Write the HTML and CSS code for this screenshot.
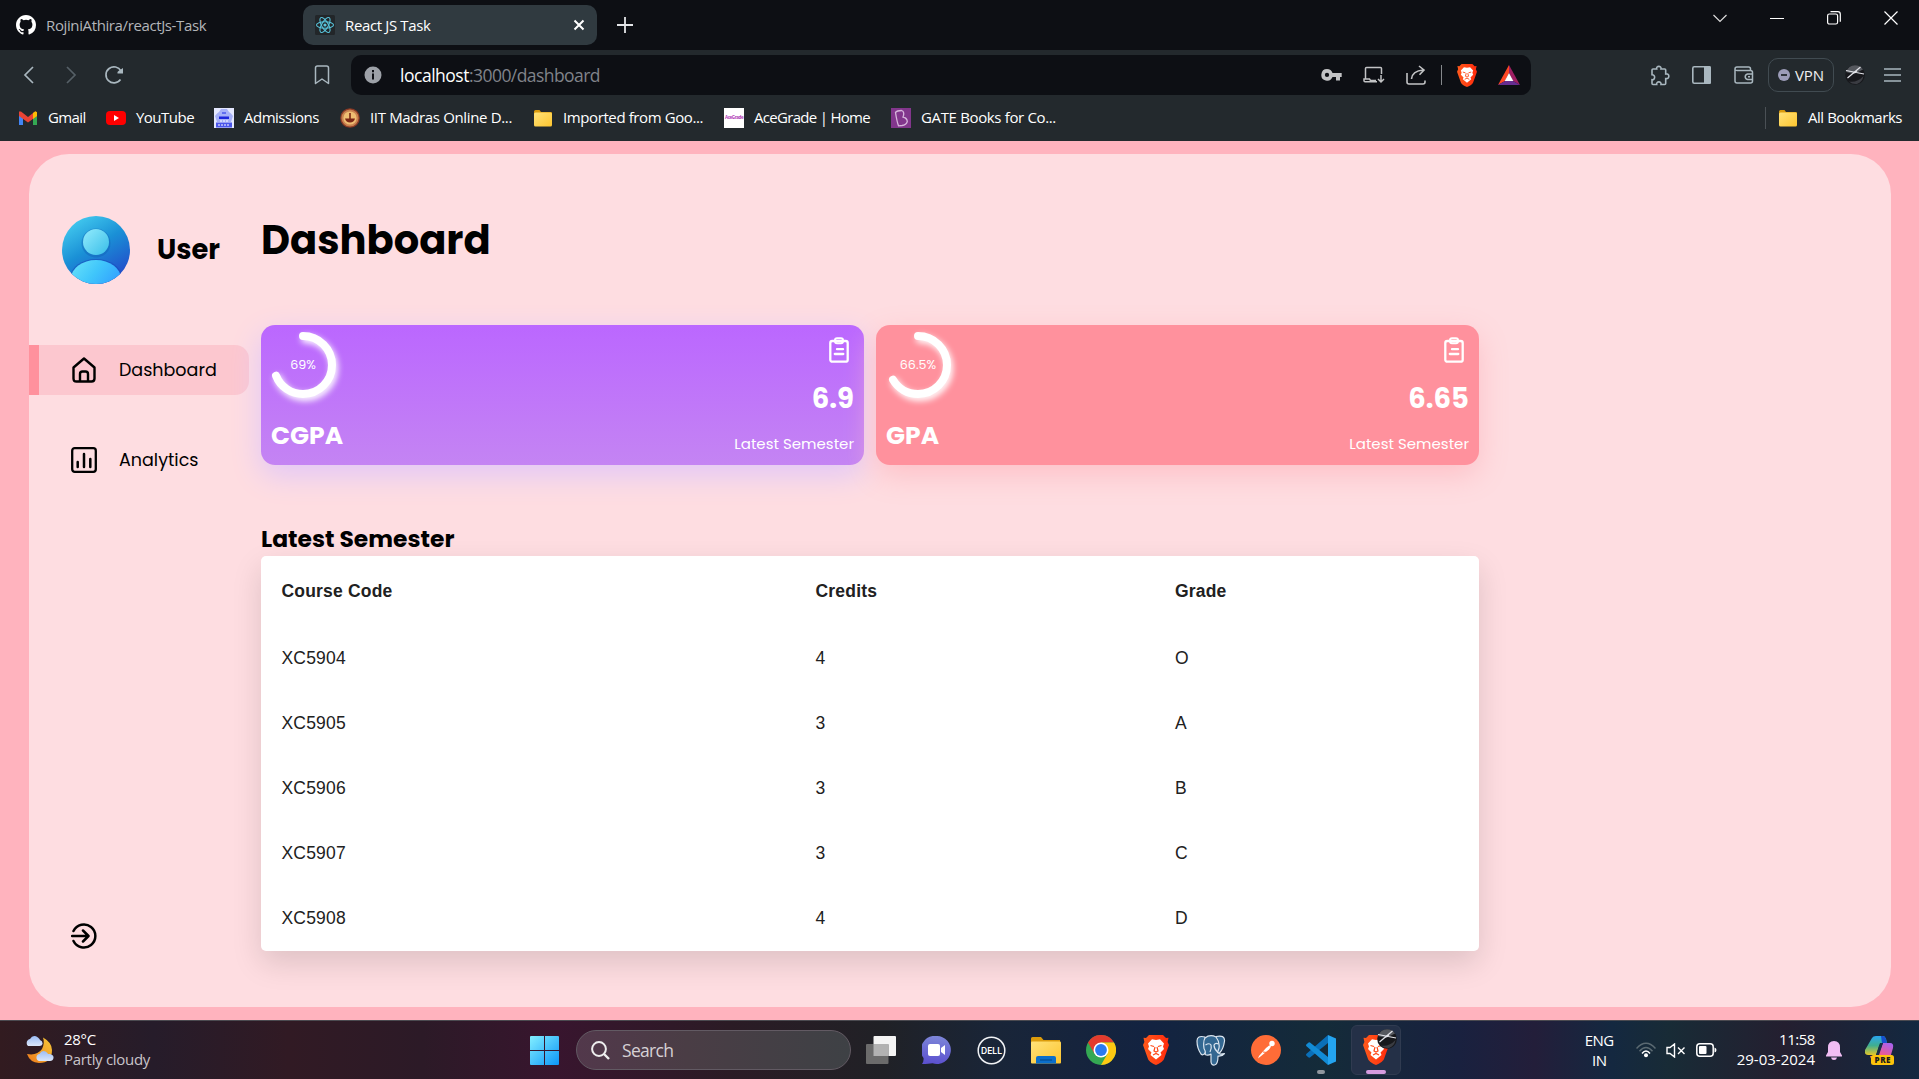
FILE: index.html
```html
<!DOCTYPE html>
<html lang="en">
<head>
<meta charset="utf-8">
<title>React JS Task</title>
<link rel="stylesheet" href="styles.css">
</head>
<body>
<svg class="defs" width="0" height="0">
  <defs>
    <linearGradient id="brave-g" x1="0" x2="1"><stop offset="0" stop-color="#ff5a1c"/><stop offset="1" stop-color="#ff2a0c"/></linearGradient>
    <linearGradient id="folder-g" x1="0" x2="1" y1="0" y2="1"><stop offset="0" stop-color="#ffe27a"/><stop offset="1" stop-color="#fdc52f"/></linearGradient>
    <linearGradient id="avatar-g" x1="0.2" x2="0.8" y1="0" y2="1"><stop offset="0" stop-color="#45cdf0"/><stop offset="0.45" stop-color="#1a90d6"/><stop offset="1" stop-color="#2344c9"/></linearGradient>
    <linearGradient id="head-g" x1="0" x2="1" y1="0" y2="1"><stop offset="0" stop-color="#93ecfd"/><stop offset="1" stop-color="#38bde8"/></linearGradient>
    <linearGradient id="torso-g" x1="0" x2="1" y1="0" y2="0.6"><stop offset="0" stop-color="#6be4f9"/><stop offset="0.5" stop-color="#40c6fb"/><stop offset="1" stop-color="#309cff"/></linearGradient>
    <clipPath id="avatar-c"><circle cx="34" cy="34" r="34"/></clipPath>
    <linearGradient id="win-g" x1="0" x2="1" y1="0" y2="1"><stop offset="0" stop-color="#83efff"/><stop offset="1" stop-color="#0c95f8"/></linearGradient>
    <linearGradient id="chat-g" x1="0.5" x2="0.4" y1="0" y2="1"><stop offset="0" stop-color="#7d86d8"/><stop offset="1" stop-color="#5b50cf"/></linearGradient>
    <linearGradient id="cloud-g" x1="0" x2="0" y1="0" y2="1"><stop offset="0" stop-color="#9cbdf5"/><stop offset="1" stop-color="#dce7fa"/></linearGradient>
    <linearGradient id="moon-g" x1="1" x2="0" y1="0" y2="1"><stop offset="0" stop-color="#f6c938"/><stop offset="1" stop-color="#ee7a1c"/></linearGradient>
    <linearGradient id="cop-a" x1="0" x2="0" y1="0" y2="1"><stop offset="0" stop-color="#2aa6ef"/><stop offset="0.5" stop-color="#3fae90"/><stop offset="1" stop-color="#e5c728"/></linearGradient>
    <linearGradient id="cop-b" x1="0.8" x2="0.2" y1="0" y2="1"><stop offset="0" stop-color="#a862ee"/><stop offset="0.6" stop-color="#ea5a94"/><stop offset="1" stop-color="#f6804f"/></linearGradient>
    <symbol id="brave" viewBox="0 0 26 30">
      <path d="M6 0h14l3 3 2.500-.3L24.600 7 26 10l-5 14c-1 2.500-5 5-8 6-3-1-7-3.500-8-6L0 10l1.400-3L.5 2.700 3 3z" fill="url(#brave-g)"/>
      <path d="M13 5l4-.8 4 4.300-1 3 1 2.500-3.500 3.500 1 2.500L13 24.500 7.500 20l1-2.500L5 14l1-2.500-1-3 4-4.300z" fill="#fff"/>
      <path d="M7.500 10.500l3.500 1M18.500 10.500l-3.500 1M12 12l-1 4 2 1 2-1-1-4M10 20l3-1.600 3 1.600" fill="none" stroke="#ff4a18" stroke-width="1.200"/>
    </symbol>
    <symbol id="folder" viewBox="0 0 20 20">
      <path d="M1 3.500Q1 2 2.500 2h4L8 4h10q1 0 1 1v3H1z" fill="#d99a0d"/>
      <rect x="1" y="4.500" width="18" height="14" rx="1.500" fill="url(#folder-g)"/>
    </symbol>
    <symbol id="stone" viewBox="0 0 20 20">
      <circle cx="10" cy="10" r="9.800" fill="#17181c"/>
      <path d="M1 7Q3.500.5 10 .3q5 0 8 4.200L9 9z" fill="#55585e"/>
      <path d="M4 16.500Q12 18 18.500 11q-1 6-6.500 8-5 .5-8-2.500z" fill="#3a3c42"/>
      <path d="M1 5.500l18 3.500M2.500 13L15.500 2M7 9l5-3" stroke="#e3e4ea" stroke-width="1.200" fill="none"/>
    </symbol>
    <symbol id="clipboard" viewBox="0 0 20 26">
      <rect x="1.300" y="4" width="17.400" height="20.700" rx="2" fill="none" stroke="#fff" stroke-width="2.300"/>
      <rect x="6" y="1.200" width="8" height="5" rx="2" fill="none" stroke="#fff" stroke-width="2"/>
      <path d="M8 12.200h6M5.800 17h8.500" stroke="#fff" stroke-width="2.300" stroke-linecap="round"/>
    </symbol>
  </defs>
</svg>

<header class="tabs">
  <div class="tab tab-idle">
    <svg width="20" height="20" viewBox="0 0 16 16"><path fill="#fff" d="M8 0C3.580 0 0 3.580 0 8c0 3.540 2.290 6.530 5.470 7.590.4.070.55-.17.55-.38 0-.19-.01-.82-.01-1.490-2.010.37-2.530-.49-2.690-.94-.09-.23-.48-.94-.82-1.130-.28-.15-.68-.52-.01-.53.63-.01 1.080.58 1.230.82.72 1.210 1.870.87 2.330.66.07-.52.28-.87.51-1.070-1.780-.2-3.640-.89-3.640-3.950 0-.87.31-1.590.82-2.150-.08-.2-.36-1.020.08-2.120 0 0 .67-.21 2.200.82a7.600 7.600 0 0 1 4 0c1.530-1.040 2.200-.82 2.200-.82.44 1.100.16 1.920.08 2.120.51.56.82 1.270.82 2.150 0 3.070-1.870 3.750-3.650 3.950.29.25.54.73.54 1.480 0 1.070-.01 1.930-.01 2.200 0 .21.15.46.55.38A8 8 0 0 0 16 8c0-4.420-3.580-8-8-8z"/></svg>
    <span>RojiniAthira/reactJs-Task</span>
  </div>
  <div class="tab tab-active">
    <svg width="20" height="20" viewBox="0 0 20 20"><rect width="20" height="20" rx="1.500" fill="#222629"/><g fill="none" stroke="#58c4dc" stroke-width="1.100"><ellipse cx="10" cy="10" rx="8.500" ry="3.300"/><ellipse cx="10" cy="10" rx="8.500" ry="3.300" transform="rotate(60 10 10)"/><ellipse cx="10" cy="10" rx="8.500" ry="3.300" transform="rotate(120 10 10)"/></g><circle cx="10" cy="10" r="1.600" fill="#58c4dc"/></svg>
    <span>React JS Task</span>
    <svg class="tab-close" width="12" height="12" viewBox="0 0 12 12"><path d="M1.500 1.500l9 9M10.500 1.500l-9 9" stroke="#fff" stroke-width="2"/></svg>
  </div>
  <svg class="plus" width="16" height="16" viewBox="0 0 16 16"><path d="M8 0v16M0 8h16" stroke="#e3e5e8" stroke-width="1.800"/></svg>
  <div class="winctl">
    <svg width="14" height="14" viewBox="0 0 14 14"><path d="M.5 4L7 10.500 13.500 4" fill="none" stroke="#ddd" stroke-width="1.200"/></svg>
    <svg width="14" height="14" viewBox="0 0 14 14"><path d="M0 7.500h14" stroke="#fff"/></svg>
    <svg width="14" height="14" viewBox="0 0 14 14"><rect x=".6" y="3" width="10" height="10" rx="1.800" fill="none" stroke="#fff" stroke-width="1.200"/><path d="M3.500.7h7.300q2.500 0 2.500 2.500v7.500" fill="none" stroke="#fff" stroke-width="1.200"/></svg>
    <svg width="14" height="14" viewBox="0 0 14 14"><path d="M.5.500l13 13M13.500.500l-13 13" stroke="#fff" stroke-width="1.200"/></svg>
  </div>
</header>

<nav class="toolbar">
  <svg class="t-back" width="12" height="20" viewBox="0 0 12 20"><path d="M10 2L2 10l8 8" fill="none" stroke="#a9b7bf" stroke-width="1.700"/></svg>
  <svg class="t-fwd" width="12" height="20" viewBox="0 0 12 20"><path d="M2 2l8 8-8 8" fill="none" stroke="#566067" stroke-width="1.700"/></svg>
  <svg class="t-reload" width="20" height="20" viewBox="0 0 20 20"><path d="M16.500 14.500A8 8 0 1 1 17 6" fill="none" stroke="#a9b7bf" stroke-width="1.700"/><path d="M19 3v5.500h-5.500q-.5-1.700 1-2.500z" fill="#a9b7bf"/></svg>
  <svg class="t-mark" width="16" height="20" viewBox="0 0 16 20"><path d="M1.500 3q0-2 2-2h9q2 0 2 2v15.500L8 14l-6.500 4.500z" fill="none" stroke="#a9b7bf" stroke-width="1.500" stroke-linejoin="round"/></svg>
  <div class="url">
    <svg width="18" height="18" viewBox="0 0 18 18"><circle cx="9" cy="9" r="8.500" fill="#9da1a8"/><path d="M9 4v2.200M9 7.500v6" stroke="#0d0f14" stroke-width="2"/></svg>
    <span class="url-text"><b>localhost</b><i>:3000/dashboard</i></span>
    <div class="url-icons">
      <svg width="21" height="14" viewBox="0 0 21 14"><path fill-rule="evenodd" d="M6 1a5.800 5.800 0 1 0 5.500 8H15v3.500h4V9h1.700V5h-9.200A5.800 5.800 0 0 0 6 1zm0 3.800a2.100 2.100 0 1 1 0 4.300 2.100 2.100 0 0 1 0-4.300z" fill="#c2c3c5"/></svg>
      <svg width="22" height="18" viewBox="0 0 22 18"><path d="M18.500 8V2.500q0-1-1-1h-14q-1 0-1 1V13M14 15.800H2q-1 0-1-1V13h5.500l1 1.500H13M18 9v6.500M15 13l3 3 3-3" fill="none" stroke="#c2c3c5" stroke-width="1.500"/></svg>
      <svg width="20" height="20" viewBox="0 0 20 20"><path d="M1 8v9q0 2 2 2h14q2 0 2-2v-1.500M5.500 14q.5-8 12-9M13 1l5 4-4.500 4.800" fill="none" stroke="#c2c3c5" stroke-width="1.600"/></svg>
      <span class="sep"></span>
      <svg width="20" height="23"><use href="#brave"/></svg>
      <svg width="22" height="20" viewBox="0 0 22 20"><path d="M11 0L0 20l7-4 4-8z" fill="#ff4724"/><path d="M11 0l11 20-7-4-4-8z" fill="#9e1f63"/><path d="M0 20h22l-7-4H7z" fill="#662d91"/><path d="M11 8l4.300 8H6.700z" fill="#fff"/></svg>
    </div>
  </div>
  <div class="tools">
    <svg width="20" height="21" viewBox="0 0 20 21"><path d="M2 5q0-1 1-1h3.700C5.800.5 11.800.5 11 4h3.700q1 0 1 1v4c4.200-.8 4.200 5.300 0 4.600V18.500q0 1-1 1H11c.7-3.500-5-3.500-4.300 0H3q-1 0-1-1v-3.800c3.500.5 3.500-5.300 0-5z" fill="none" stroke="#a9b7bf" stroke-width="1.600"/></svg>
    <svg width="19" height="18" viewBox="0 0 19 18"><rect x=".8" y=".8" width="17.400" height="16.400" rx="1.500" fill="none" stroke="#a9b7bf" stroke-width="1.600"/><path d="M12 0h5.500q1.500 0 1.500 1.500v15q0 1.500-1.500 1.500H12z" fill="#a9b7bf"/></svg>
    <svg class="wallet" width="20" height="18" viewBox="0 0 20 18"><path d="M16.500 4.500V3q0-2-2-2H3Q1 1 1 3v12q0 2 2 2h13.500q2 0 2-2V6.500q0-2-2-2H3q-1.500 0-2-1M19 8h-5.500a2.800 2.800 0 0 0 0 5.500H19M14 10.700h2" fill="none" stroke="#a9b7bf" stroke-width="1.500"/></svg>
    <div class="vpn"><svg width="12" height="12" viewBox="0 0 12 12"><circle cx="6" cy="6" r="6" fill="#9c9cb8"/><path d="M3 6h6" stroke="#23292d" stroke-width="1.800"/></svg><span>VPN</span></div>
    <svg class="profile" width="20" height="20"><use href="#stone"/></svg>
    <svg width="17" height="14" viewBox="0 0 17 14"><path d="M0 1h17M0 7h17M0 13h17" stroke="#a9b7bf" stroke-width="1.500"/></svg>
  </div>
</nav>

<nav class="bookmarks">
  <div class="bm bm-gmail"><svg width="20" height="20" viewBox="0 0 20 20"><path d="M1 17V5h4v12z" fill="#4285f4"/><path d="M15 17V5h4v12z" fill="#34a853"/><path d="M1 3.500h2L10 9l7-5.500 2 1V8l-9 6.500L1 8z" fill="#ea4335"/><path d="M15 5l2.500-1.700 1.500 1V8l-4 3z" fill="#fbbc04"/></svg><span>Gmail</span></div>
  <div class="bm bm-youtube"><svg width="20" height="20" viewBox="0 0 20 20"><rect y="3" width="20" height="14" rx="4" fill="#f00"/><path d="M8 7l5 3-5 3z" fill="#fff"/></svg><span>YouTube</span></div>
  <div class="bm bm-admissions"><svg width="20" height="20" viewBox="0 0 20 20"><rect width="20" height="20" fill="#e4e8ff"/><path d="M1 8q2-3 4-4l2-3h6l2 3q2 1 4 4l-2 6H3z" fill="#a5b0f8"/><path d="M5 8.500h10v2.500H5z" fill="#1c26dd"/><path d="M8 4h4v2H8z" fill="#5f6df0"/><path d="M2 14.500h16v5H2z" fill="#4a55ea"/><path d="M4 17h12M6 13h8" stroke="#fff" stroke-dasharray="2 1"/></svg><span>Admissions</span></div>
  <div class="bm bm-iit"><svg width="20" height="20" viewBox="0 0 20 20"><circle cx="10" cy="10" r="9.800" fill="#8c3a25"/><circle cx="10" cy="10" r="8.600" fill="#c98250"/><circle cx="10" cy="10" r="6.600" fill="#efbd72"/><path d="M5 10.500h10q-1 4-5 4t-5-4z" fill="#7c2514"/><path d="M10 5v6" stroke="#7c2514" stroke-width="1.600"/></svg><span>IIT Madras Online D...</span></div>
  <div class="bm bm-imported"><svg width="20" height="20"><use href="#folder"/></svg><span>Imported from Goo...</span></div>
  <div class="bm bm-ace"><svg width="20" height="20" viewBox="0 0 20 20"><rect width="20" height="20" fill="#fff"/><text x="1" y="11.300" font-family="Open Sans, sans-serif" font-size="4.500" font-weight="700" fill="#b03bb5" textLength="18">AceGrade</text></svg><span>AceGrade | Home</span></div>
  <div class="bm bm-gate"><svg width="20" height="20" viewBox="0 0 20 20"><rect width="20" height="20" fill="#82368c"/><path d="M4.500 4.500q1.500-2 6-2 3 1 2 5l-.5 1.500q4 1 4.300 4.500-1 3.500-5.300 4l-3.500.3Q6 14 4.500 4.500z" fill="none" stroke="#d7b5dc" stroke-width="1.300"/></svg><span>GATE Books for Co...</span></div>
  <div class="bm bm-all"><svg width="20" height="20"><use href="#folder"/></svg><span>All Bookmarks</span></div>
</nav>

<main class="page">
  <div class="panel">
    <aside class="side">
      <div class="user">
        <svg width="68" height="68" viewBox="0 0 68 68"><g clip-path="url(#avatar-c)"><rect width="68" height="68" fill="url(#avatar-g)"/><circle cx="34" cy="27" r="14.500" fill="#1260b5" opacity=".4"/><ellipse cx="34" cy="62" rx="26" ry="19" fill="#1546b8" opacity=".5"/><circle cx="34" cy="26" r="13" fill="url(#head-g)"/><ellipse cx="34" cy="62.500" rx="25" ry="18.500" fill="url(#torso-g)"/></g></svg>
        <h2>User</h2>
      </div>
      <a class="nav nav-on">
        <svg width="26" height="26" viewBox="0 0 26 26"><path d="M2.500 10.500L13 1.500l10.500 9v11q0 3-3 3h-15q-3 0-3-3z" fill="none" stroke="#000" stroke-width="2.400" stroke-linejoin="round"/><path d="M9 24v-7q0-2.500 2.500-2.500h3q2.500 0 2.500 2.500v7" fill="none" stroke="#000" stroke-width="2.400"/></svg>
        <span>Dashboard</span>
      </a>
      <a class="nav">
        <svg width="26" height="26" viewBox="0 0 26 26"><rect x="1.200" y="1.200" width="23.600" height="23.600" rx="2.500" fill="none" stroke="#000" stroke-width="2.300"/><path d="M6.700 15v5M13 7v13M19.300 12v8" stroke="#000" stroke-width="2.500" stroke-linecap="round"/></svg>
        <span>Analytics</span>
      </a>
      <svg class="logout" width="26" height="26" viewBox="0 0 26 26"><path d="M2.500 8a11.500 11.500 0 1 1 0 10M1 13h16M12 7.500l5.500 5.500-5.500 5.500" fill="none" stroke="#000" stroke-width="2.500" stroke-linecap="round" stroke-linejoin="round"/></svg>
    </aside>

    <section class="content">
      <h1>Dashboard</h1>
      <div class="cards">
        <article class="card violet">
          <div class="card-l">
            <div class="ring">
              <svg width="84" height="84" viewBox="0 0 84 84"><circle class="arc" cx="42" cy="42" r="29" pathLength="100" stroke-dasharray="69 100" transform="rotate(-90 42 42)"/></svg>
              <span class="pct">69%</span>
            </div>
            <h3>CGPA</h3>
          </div>
          <div class="card-r">
            <svg width="20" height="26"><use href="#clipboard"/></svg>
            <strong>6.9</strong>
            <span class="note">Latest Semester</span>
          </div>
        </article>
        <article class="card rose">
          <div class="card-l">
            <div class="ring">
              <svg width="84" height="84" viewBox="0 0 84 84"><circle class="arc" cx="42" cy="42" r="29" pathLength="100" stroke-dasharray="66.5 100" transform="rotate(-90 42 42)"/></svg>
              <span class="pct">66.5%</span>
            </div>
            <h3>GPA</h3>
          </div>
          <div class="card-r">
            <svg width="20" height="26"><use href="#clipboard"/></svg>
            <strong>6.65</strong>
            <span class="note">Latest Semester</span>
          </div>
        </article>
      </div>
      <h2 class="sub">Latest Semester</h2>
      <div class="grid">
        <div class="row head"><span>Course Code</span><span>Credits</span><span>Grade</span></div>
        <div class="row"><span>XC5904</span><span>4</span><span>O</span></div>
        <div class="row"><span>XC5905</span><span>3</span><span>A</span></div>
        <div class="row"><span>XC5906</span><span>3</span><span>B</span></div>
        <div class="row"><span>XC5907</span><span>3</span><span>C</span></div>
        <div class="row"><span>XC5908</span><span>4</span><span>D</span></div>
      </div>
    </section>
  </div>
</main>

<footer class="taskbar">
  <div class="weather">
    <svg width="32" height="30" viewBox="0 0 32 30"><path d="M19 2.500q9 5 9 12.500 0 13-13 13Q6 27.500 3 19q10 2 15-5 3-6 1-11.500z" fill="url(#moon-g)"/><path d="M4 11a4 4 0 0 1 0-6q1-1 2-1 3-5 8-1.500Q16 4 16 5q3 1 2.500 4-.5 2-3 2z" fill="url(#cloud-g)"/><path d="M15 26a3.600 3.600 0 0 1 .5-7q2-4 6-2.500 2 1 2.500 2.500h2q4 1 3.500 4-.5 3-3.500 3z" fill="url(#cloud-g)"/></svg>
    <div><p class="deg">28°C</p><p class="sky">Partly cloudy</p></div>
  </div>
  <div class="apps">
    <svg class="start" width="29" height="29" viewBox="0 0 29 29"><path d="M0 1q0-1 1-1h13v14H0zM15 0h13q1 0 1 1v13H15zM0 15h14v14H1q-1 0-1-1zM15 15h14v13q0 1-1 1H15z" fill="url(#win-g)"/></svg>
    <div class="search"><svg width="19" height="19" viewBox="0 0 19 19"><circle cx="8" cy="8" r="6.900" fill="none" stroke="#eee" stroke-width="2"/><path d="M13 13l5 5" stroke="#eee" stroke-width="2.400"/></svg><span>Search</span></div>
    <div class="app"><svg width="30" height="28" viewBox="0 0 30 28"><rect x="7.500" width="22.500" height="20" rx="1" fill="#f4f4f4"/><rect y="8" width="22.500" height="20" rx="1" fill="#6b6b6b"/><rect x="7.500" y="8" width="15" height="12" fill="#b2b2b2"/></svg></div>
    <div class="app"><svg width="29" height="28" viewBox="0 0 29 28"><path d="M14.500 0a14 14 0 1 1-4 27.300Q7 28 0 28q2-3 1.500-6A14 14 0 0 1 14.500 0z" fill="url(#chat-g)"/><rect x="6" y="8" width="12" height="12" rx="2" fill="#fff"/><path d="M19 12l4-3v10l-4-3z" fill="#fff"/></svg></div>
    <div class="app"><svg width="29" height="29" viewBox="0 0 29 29"><circle cx="14.500" cy="14.500" r="13.300" fill="none" stroke="#f0f2f5" stroke-width="1.500"/><text x="4" y="18" font-family="Inter, sans-serif" font-size="9.500" font-weight="600" fill="#fff" textLength="21" lengthAdjust="spacingAndGlyphs">DELL</text></svg></div>
    <div class="app"><svg width="30" height="27" viewBox="0 0 30 27"><path d="M0 1.500Q0 0 1.500 0H10l2.500 3H29v6H0z" fill="#dc9c0c"/><rect y="4.500" width="30" height="22" rx="1" fill="url(#folder-g)"/><path d="M5 26.500V21q0-2 2-2h16q2 0 2 2v5.500z" fill="#0b6fcb"/><path d="M9 23h12" stroke="#064f96" stroke-width="1.300"/></svg></div>
    <div class="app"><svg width="30" height="30" viewBox="0 0 30 30"><circle cx="15" cy="15" r="15" fill="#34a853"/><path d="M2 7.500A15 15 0 0 1 28 7.500H15L8.500 18.800z" fill="#e33b2e"/><path d="M28 7.500A15 15 0 0 1 15 30l6.500-11.200L15 7.500z" fill="#fdc912"/><circle cx="15" cy="15" r="7.500" fill="#fff"/><circle cx="15" cy="15" r="5.900" fill="#2a7af0"/></svg></div>
    <div class="app"><svg width="26" height="30"><use href="#brave"/></svg></div>
    <div class="app"><svg width="30" height="31" viewBox="0 0 30 31"><g fill="#336791" stroke="#dbe5ef" stroke-width="1.200" stroke-linejoin="round"><path d="M9 2Q1 0 1 6q0 7 4 13 2 2 4-1l2-2z"/><path d="M20 1.500Q29-.5 28.500 6q-1 8-5 12l-5-1z"/><path d="M9 3q5-4 11-1 4 5 3 11l-1.500 4.500 3 1.700 4-.5q-2 2.700-6.500 2.300Q22 29.500 18.500 30q-3 .5-3.500-3V19q-3 2-6 .5Q10 17 8 13.500 7 6 9 3z"/><path d="M9.500 10q4-2.500 5.500 0 1 3-1 7M22.500 9q-3-1.500-4.500 1 0 4 3.500 7" fill="none"/></g></svg></div>
    <div class="app"><svg width="30" height="30" viewBox="0 0 30 30"><circle cx="15" cy="15" r="15" fill="#ff6c37"/><path d="M8 21l7-8q3-3 5-3 .5 2-2 4.500L9.500 21.500l-2.500 2z" fill="#fff"/><circle cx="21" cy="8.500" r="2.700" fill="#fff"/><path d="M12 17l4 .5" stroke="#ff6c37"/></svg></div>
    <div class="app"><svg width="30" height="30" viewBox="0 0 30 30"><path d="M22 0l8 3.500v23L22 30z" fill="#24a4f0"/><path d="M22 0v8L4 22.500Q3 23 2 22L.3 20.500q-.6-1 .2-1.700z" fill="#0a6fb8"/><path d="M22 30v-8L4 7.500Q3 7 2 8L.3 9.500q-.6 1 .2 1.700z" fill="#128bd5"/></svg><i class="dot"></i></div>
    <div class="app app-on"><svg width="26" height="30"><use href="#brave"/></svg><svg class="badge" width="20" height="20"><use href="#stone"/></svg><i class="dot"></i></div>
  </div>
  <div class="tray">
    <div class="lang"><p>ENG</p><p>IN</p></div>
    <svg class="wifi" width="20" height="16" viewBox="0 0 20 16"><g fill="none" stroke-width="1.500"><path d="M.5 6.500q9.500-10.500 19 0M3.500 9.200q6.500-7.500 13 0" stroke="#5b6a72"/><path d="M6 11.500q4-5 8 0" stroke="#fff"/></g><circle cx="10" cy="13.300" r="2" fill="#fff"/></svg>
    <svg class="mute" width="20" height="15" viewBox="0 0 20 15"><path d="M1 4.500h3L8.500 1v13L4 10.500H1zM12 4.500l6.500 6.500M18.500 4.500L12 11" fill="none" stroke="#fff" stroke-width="1.400"/></svg>
    <svg class="batt" width="21" height="14" viewBox="0 0 21 14"><rect x=".8" y=".8" width="16.400" height="12.400" rx="3" fill="none" stroke="#fff" stroke-width="1.500"/><rect x="3" y="3" width="7.500" height="8" rx="1" fill="#fff"/><path d="M18.500 4.500q2 .5 2 2.500t-2 2.500z" fill="#fff"/></svg>
    <div class="clock"><p class="time">11:58</p><p>29-03-2024</p></div>
    <svg class="bell" width="16" height="19" viewBox="0 0 16 19"><path d="M8 0q6 0 6 6.500V11l2 3.500v1H0v-1L2 11V6.500Q2 0 8 0zM5 16.500h6q-.5 2.500-3 2.500t-3-2.500z" fill="#f1bdf3"/></svg>
    <svg class="copilot" width="30" height="29" viewBox="0 0 30 29"><path d="M7 2q1-2 4-2h7q2 0 3 3l1 4h-4q-3 0-4 3l-3 9H3q-4 0-3-5z" fill="url(#cop-a)"/><path d="M16 0h2q2 0 3 3l1 4h-5z" fill="#1650ce"/><path d="M18 7h7q4 0 3 5l-3 10q-1 2-3 2H8q-2 0-3-4h5q3 0 4-3z" fill="url(#cop-b)"/><path d="M15 7h3l-4 12h-3z" fill="#183048"/><rect x="6" y="19" width="23" height="10" rx="2.500" fill="#fcc30b"/><text x="9.500" y="27" font-family="Open Sans, sans-serif" font-size="8" font-weight="800" fill="#1c1c1c" textLength="16">PRE</text></svg>
  </div>
</footer>
</body>
</html>
```
FILE: styles.css
```css
* { box-sizing: border-box; margin: 0; }
body {
  width: 1919px; height: 1079px; overflow: hidden;
  display: flex; flex-direction: column;
  font-family: "Segoe UI", "Open Sans", sans-serif; font-size: 15px; color: #fff;
}
svg { display: block; flex: none; }
span, p, h1, h2, h3, strong { white-space: nowrap; }
.defs { position: absolute; }

/* browser tab strip */
.tabs { flex: none; height: 50px; background: #0d0f14; display: flex; align-items: center; padding-left: 16px; }
.tab { display: flex; align-items: center; gap: 10px; }
.tab span { padding-bottom: 1px; }
.tab-idle { width: 287px; color: #b3b5b9; letter-spacing: -0.38px; }
.tab-active { width: 294px; height: 40px; background: #303a40; border-radius: 10px; padding: 0 12px; letter-spacing: -0.36px; }
.tab-close { margin-left: auto; }
.plus { margin-left: 20px; }
.winctl { margin: -14px 21px 0 auto; display: flex; gap: 43px; }

/* address bar */
.toolbar { flex: none; height: 50px; background: #23292d; display: flex; align-items: center; }
.t-back { margin-left: 23px; }
.t-fwd { margin-left: 30px; }
.t-reload { margin-left: 27px; }
.t-mark { margin-left: 190px; }
.url { margin-left: 21px; width: 1180px; height: 40px; border-radius: 10px; background: #0d0f14; display: flex; align-items: center; padding: 0 11px 0 13px; }
.url-text { margin-left: 18px; font-size: 17.5px; padding-bottom: 1px; }
.url-text b { font-weight: 400; letter-spacing: -0.48px; }
.url-text i { font-style: normal; color: #80838a; letter-spacing: -0.56px; }
.url-icons { margin-left: auto; display: flex; align-items: center; gap: 21px; }
.sep { width: 1px; height: 20px; background: #85888c; margin: 0 -6px 0 -6px; }
.tools { flex: 1; display: flex; align-items: center; padding: 0 17px 0 119px; }
.tools > svg + svg { margin-left: 22px; }
.tools .wallet { margin-left: 23px; }
.tools .vpn { margin: 0 11px 0 14px; }
.tools .profile + svg { margin-left: 19px; }
.vpn { width: 66px; height: 34px; border: 1px solid #414b51; border-radius: 10px; display: flex; align-items: center; gap: 5px; padding-left: 9px; color: #f0f0f0; letter-spacing: -0.1px; }

/* bookmarks bar */
.bookmarks { flex: none; height: 41px; background: #23292d; display: flex; align-items: center; padding: 0 17px 6px 18px; }
.bm { flex: none; display: flex; align-items: center; gap: 10px; letter-spacing: -0.4px; }
.bm span { padding-bottom: 2px; }
.bm-gmail { width: 88px; letter-spacing: -0.6px; }
.bm-youtube { width: 108px; letter-spacing: -0.52px; }
.bm-admissions { width: 126px; letter-spacing: -0.5px; }
.bm-iit { width: 193px; letter-spacing: -0.35px; }
.bm-imported { width: 191px; }
.bm-ace { width: 167px; letter-spacing: -0.7px; }
.bm-gate { letter-spacing: -0.35px; }
.bm-all { margin-left: auto; border-left: 1px solid #4a5055; padding-left: 12px; letter-spacing: -0.46px; }

/* page */
.page { flex: none; height: 879px; background: #ffb3be; padding: 13px 28px 13px 29px; color: #000; font-family: "Poppins", "Inter", sans-serif; }
.panel { height: 853px; border-radius: 40px; background: #fedde1; display: flex; }
.side { width: 232px; display: flex; flex-direction: column; padding: 62px 0 58px; }
.user { display: flex; align-items: center; gap: 26px; padding-left: 33px; margin-bottom: 61px; height: 68px; }
.user h2 { font-size: 27.3px; font-weight: 700; padding-left: 1px; }
.nav { width: 220px; height: 50px; display: flex; align-items: center; padding-left: 42px; gap: 22px; font-size: 17.5px; margin-bottom: 40px; }
.nav-on { border-left: 10px solid #ff919d; padding-left: 32px; background: #fcc7cf; border-radius: 0 14px 14px 0; }
.logout { margin: auto 0 0 42px; }
.content { width: 1218px; }
h1 { margin-top: 62px; height: 48px; line-height: 48px; font-size: 40px; font-weight: 700; }
.cards { margin-top: 61px; display: flex; gap: 12px; }
.card { width: 603px; height: 140px; border-radius: 14px; color: #fff; display: flex; justify-content: space-between; padding: 0 10px; }
.violet { background: linear-gradient(#bb67ff, #c484f3); box-shadow: 0 10px 30px #e0c6f9; }
.rose { background: #ff919d; box-shadow: 0 10px 30px #fdc0c7; }
.ring { width: 84px; height: 84px; margin: -2px 0 0 -10px; display: grid; place-items: center; }
.ring > * { grid-area: 1 / 1; }
.arc { fill: none; stroke: #fff; stroke-width: 8px; stroke-linecap: round; }
.ring svg { overflow: visible; filter: drop-shadow(2px 3px 3px #fff); }
.pct { font-size: 12.7px; }
.card h3 { font-size: 25px; line-height: 30px; font-weight: 700; margin-top: 14px; }
.card-r { display: flex; flex-direction: column; align-items: flex-end; }
.card-r svg { margin: 12px 5px 0 0; }
.card strong { font-size: 27.5px; line-height: 32px; font-weight: 700; margin-top: 20px; }
.note { font-size: 15px; line-height: 20px; margin-top: 19px; }
.sub { margin-top: 57px; height: 34px; line-height: 34px; font-size: 23.4px; font-weight: 700; }
.grid { height: 395px; background: #fff; border-radius: 5px; box-shadow: 0 12px 30px rgba(0, 0, 0, 0.13); font: 17.5px "Liberation Sans", sans-serif; letter-spacing: 0.19px; color: #212121; padding-left: 20.5px; }
.row { display: grid; grid-template-columns: 534px 359.5px 1fr; height: 65px; align-items: center; }
.head { height: 70px; font-weight: 700; }

/* taskbar */
.taskbar { flex: none; height: 59px; border-top: 1px solid #4b4a50; display: flex; align-items: center; background: linear-gradient(90deg, #321b20, #261c2a 8%, #311a24 15%, #2c1a27 22%, #38152e 29%, #2b1b25 38%, #202126 46%, #192538 52%, #132341 60%, #142b39 69%, #19213f 76%, #231e3a 80%, #142840 84%, #182b36 87%, #241f30 93%, #132840); }
.weather { display: flex; align-items: center; gap: 8px; padding-left: 24px; width: 530px; }
.weather p, .lang p, .clock p { line-height: 20px; }
.weather div, .clock { padding-bottom: 2px; }
.deg { letter-spacing: -0.3px; }
.sky { color: #c9c4c9; letter-spacing: -0.3px; }
.apps { display: flex; align-items: center; }
.search { width: 275px; height: 40px; margin: 0 5px 0 17px; border-radius: 20px; border: 1px solid #625a63; background: linear-gradient(90deg, #52384b, #4a3d45 40%, #3e4145); display: flex; align-items: center; padding-left: 14px; gap: 12px; font-size: 17.5px; letter-spacing: -0.7px; color: #d6d1d5; }
.app { position: relative; width: 50px; height: 50px; margin-right: 5px; display: grid; place-items: center; }
.app-on { background: #243047; border: 1px solid #303b50; border-radius: 6px; }
.badge { position: absolute; left: 25px; top: 3px; }
.dot { position: absolute; bottom: 1px; left: 21px; width: 8px; height: 4px; border-radius: 2px; background: #8f979f; }
.app-on .dot { left: 14px; width: 20px; bottom: 0; background: #d59be0; }
.tray { margin-left: auto; display: flex; align-items: center; padding-right: 24px; }
.lang { text-align: center; letter-spacing: -0.5px; }
.wifi { margin-left: 22px; }
.mute { margin-left: 10px; }
.batt { margin-left: 10px; }
.clock { margin-left: 20px; text-align: right; }
.time { letter-spacing: -0.45px; }
.bell { margin-left: 11px; }
.copilot { margin-left: 23px; }
```
